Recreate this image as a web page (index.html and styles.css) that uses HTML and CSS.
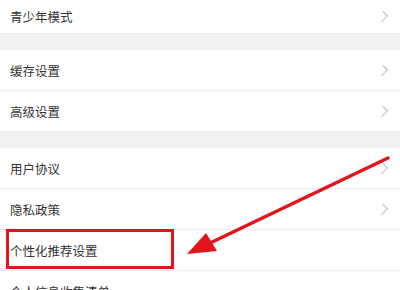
FILE: index.html
```html
<!DOCTYPE html>
<html lang="zh-CN">
<head>
<meta charset="utf-8">
<link rel="stylesheet" href="styles.css">
</head>
<body>
<div class="page">
  <div class="group">
    <div class="row row-first"><span class="label">青少年模式</span><span class="chev"></span></div>
  </div>
  <div class="gap"></div>
  <div class="group">
    <div class="row"><span class="label">缓存设置</span><span class="chev"></span></div>
    <div class="row"><span class="label">高级设置</span><span class="chev"></span></div>
  </div>
  <div class="gap"></div>
  <div class="group">
    <div class="row"><span class="label">用户协议</span><span class="chev"></span></div>
    <div class="row"><span class="label">隐私政策</span><span class="chev"></span></div>
    <div class="row"><span class="label">个性化推荐设置</span></div>
    <div class="row"><span class="label">个人信息收集清单</span></div>
  </div>
  <div class="highlight"></div>
  <svg class="arrow" width="400" height="290" viewBox="0 0 400 290">
    <line x1="388" y1="158" x2="208" y2="244" stroke="#e3141b" stroke-width="3.5" stroke-linecap="round"/>
    <polygon points="187,254 206,233 217,251" fill="#e3141b"/>
  </svg>
</div>
</body>
</html>
```
FILE: styles.css
```css
html, body {
  margin: 0;
  padding: 0;
  background: #ffffff;
}
.page {
  position: relative;
  width: 400px;
  height: 290px;
  overflow: hidden;
  font-family: "Noto Sans CJK SC", "Noto Sans", sans-serif;
  color: #333333;
}
.group {
  display: flex;
  flex-direction: column;
}
.row {
  display: flex;
  align-items: center;
  justify-content: space-between;
  height: 40px;
  padding: 0 10px 0 10px;
  border-bottom: 1px solid #ececec;
  font-size: 12.5px;
  box-sizing: content-box;
}
.row-first {
  height: 32px;
  padding-bottom: 1px;
  border-bottom: 1px solid #ececec;
}
.label {
  letter-spacing: 0;
}
.chev {
  width: 6px;
  height: 6px;
  margin-right: 4px;
  border-top: 1.2px solid #c4c4c4;
  border-right: 1.2px solid #c4c4c4;
  transform: rotate(45deg) scaleY(1.3);
}
.gap {
  height: 16px;
  background: #f1f1f1;
}
.highlight {
  position: absolute;
  left: 6px;
  top: 229px;
  width: 162px;
  height: 34px;
  border: 3px solid #e3141b;
}
.arrow {
  position: absolute;
  left: 0;
  top: 0;
}
```
